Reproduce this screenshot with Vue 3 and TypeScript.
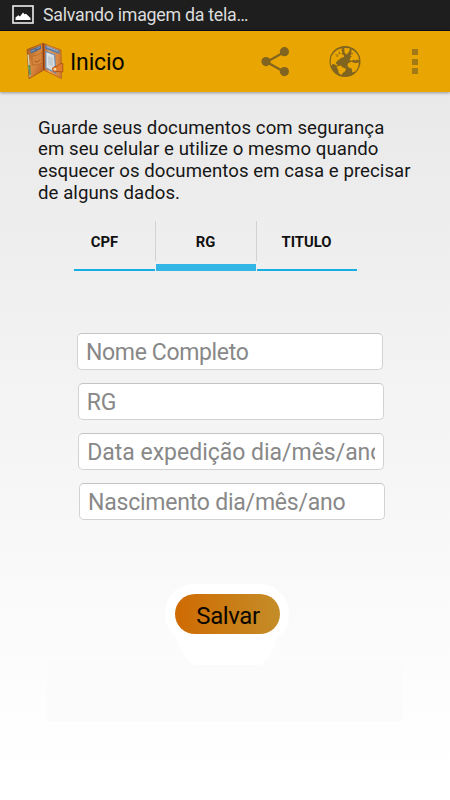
<script setup lang="ts">
import { ref } from 'vue'

type Tab = 'CPF' | 'RG' | 'TITULO'

const lines: string[] = [
  'Guarde seus documentos com segurança',
  'em seu celular e utilize o mesmo quando',
  'esquecer os documentos em casa e precisar',
  'de alguns dados.',
]
const tabs: Tab[] = ['CPF', 'RG', 'TITULO']
const active = ref<Tab>('RG')
const fields: string[] = [
  'Nome Completo',
  'RG',
  'Data expedição dia/mês/ano',
  'Nascimento dia/mês/ano',
]
</script>

<template>
  <div class="screen">
    <div class="status">
      <svg class="picture" width="22" height="19" viewBox="0 0 22 19">
        <rect x="1" y="1" width="20" height="17" fill="none" stroke="#e2e2e2" stroke-width="1.7" />
        <path d="M3.5 15V12.6L6.3 10.2L8 11.4L11 7.4L12.5 9.2L14 8.7L18.5 13V15Z" fill="#fff" />
      </svg>
      <span class="notice">Salvando imagem da tela…</span>
    </div>

    <header class="bar">
      <svg class="wallet" width="38" height="38" viewBox="0 0 38 38">
        <defs>
          <linearGradient id="leatherL" x1="0" y1="0" x2="1" y2="1">
            <stop offset="0" stop-color="#a8591f" />
            <stop offset=".5" stop-color="#d98a40" />
            <stop offset="1" stop-color="#b4541c" />
          </linearGradient>
          <linearGradient id="leatherR" x1="0" y1="0" x2="1" y2="0">
            <stop offset="0" stop-color="#a9480f" />
            <stop offset=".3" stop-color="#eda45c" />
            <stop offset="1" stop-color="#d07a35" />
          </linearGradient>
          <linearGradient id="card" x1="0" y1="0" x2="1" y2="1">
            <stop offset="0" stop-color="#e4eaee" />
            <stop offset=".6" stop-color="#d3dbe0" />
            <stop offset="1" stop-color="#edf0f1" />
          </linearGradient>
        </defs>
        <path d="M1 7.5L17 1.2L17.8 28L3 36.8Z" fill="url(#leatherL)" stroke="#9a4d18" stroke-width=".7" />
        <path d="M17 1.2L35 8L35.4 36.5L17.8 28Z" fill="url(#leatherR)" stroke="#a85820" stroke-width=".7" />
        <path d="M4 8L15 3.4V7L5 11.5Z" fill="#4d678c" />
        <path d="M5 9.5L9 7.6M10.5 6.8L14 5" stroke="#9fb1c2" stroke-width=".8" />
        <path d="M1.4 13L3.4 35L4.6 33L2.8 12.5Z" fill="#cfd6b4" />
        <path d="M2.2 23L3.4 34L5 32.5L4.2 23Z" fill="#58945f" />
        <path d="M6 14Q11 15 16 10V21Q11 24 6.4 23Z" fill="#d7853b" stroke="#ad6129" stroke-width=".6" />
        <path d="M8.5 19Q11.5 21.5 14 17.5" fill="none" stroke="#934c1c" stroke-width=".8" />
        <path d="M17.1 2L17.7 27.5" stroke="#8a3a0e" stroke-width="1" />
        <path d="M19 3.2L33.5 8.8V12L19 7Z" fill="#5f7b9f" />
        <path d="M20.5 4.8L32 9.2" stroke="#aebfcd" stroke-width=".8" />
        <path d="M19.8 9.5L28.6 12.8L29.8 31L19.8 26Z" fill="url(#card)" stroke="#7089a8" stroke-width="1.2" />
        <path d="M22 14L26.6 15.8L27 24.5L22.2 22.5Z" fill="#c3cdd2" />
        <path d="M36.8 21.5Q32.5 21 31 24.5Q26.6 24 26.4 27.4Q27 30.6 31 29.4L36.8 30Z" fill="#e07c2c" stroke="#a84a14" stroke-width=".8" />
        <circle cx="29" cy="27.2" r="1.3" fill="#ffdca6" />
      </svg>
      <h1 class="title">Inicio</h1>
      <svg class="share" width="30" height="32" viewBox="0 0 30 32" fill="#80641f">
        <path d="M23.5 6L5.5 16L23.5 26" fill="none" stroke="#80641f" stroke-width="2.2" />
        <circle cx="23.4" cy="5.7" r="4.6" />
        <circle cx="5" cy="15.6" r="4.6" />
        <circle cx="23.4" cy="25.6" r="4.6" />
      </svg>
      <svg class="globe" width="32" height="32" viewBox="0 0 32 32">
        <circle cx="16" cy="15.5" r="15.5" fill="#80641f" />
        <g fill="#e9a602">
          <path d="M2.4 10.5Q5 5.4 9.6 3.2L13.4 2.2L12.4 4.6L13.6 6.2L12.4 8L14.8 9L15 11L12 12L9.5 14L7.6 15.4L6.8 17.4L8.8 19L7.4 19.8L5 18L3.4 18.2L1.9 20Q1.2 15 2.4 10.5Z" />
          <path d="M15.2 2L20.8 2.2L20.4 5L18.6 7.6L17 8.6L15.6 6.4Z" />
          <path d="M22.4 3.6Q27.4 6 29.4 10.6L30.2 14.6L28 13.6L26.4 14.8L24.8 13.4L23 14.8L20.6 14.2L21.2 12L22.8 10.6L21.4 9.4L22.4 7Z" />
          <path d="M19.4 17L22.4 15.8L26 17L29.8 16.4Q29.8 21.6 26.6 25.2L23.4 26.4L22.6 22.4L19.6 21.4L18.4 19.2Z" />
          <path d="M7.6 20.6L11.6 19.6L14 21.4L17 22.8L16 25.4L13.8 27L12.4 29L9.8 27.2L9.2 24.2Z" />
        </g>
        <path d="M6.6 8.6L8.6 9.4L8 11M10 5.6L11 7.4L9.4 8M22 8.2L24.2 7.4" fill="none" stroke="#80641f" stroke-width=".9" />
      </svg>
      <div class="more"><i></i><i></i><i></i></div>
    </header>

    <main class="body">
      <p class="intro">
        <span v-for="line in lines" :key="line" class="line">{{ line }}</span>
      </p>

      <nav class="tabs">
        <button
          v-for="tab in tabs"
          :key="tab"
          class="tab"
          :class="{ active: tab === active }"
          @click="active = tab"
        >
          <span class="label">{{ tab }}</span>
          <span class="underline"></span>
        </button>
      </nav>

      <form class="form" @submit.prevent>
        <input v-for="f in fields" :key="f" class="field" type="text" :placeholder="f" />
        <div class="action">
          <svg class="halo" width="126" height="84" viewBox="0 0 126 84">
            <path d="M30 1H95C112 1 125 14 125 31C125 42 119 51 113 55C110 67 104 79 96 82H31C22 79 16 67 13 55C6 50 1 42 1 31C1 14 13 1 30 1Z" fill="#fff" />
          </svg>
          <button class="save">Salvar</button>
        </div>
      </form>
    </main>
  </div>
</template>

<style>
body {
  margin: 0;
}
</style>

<style scoped>
.screen {
  width: 450px;
  height: 800px;
  overflow: hidden;
  display: flex;
  flex-direction: column;
  font-family: Roboto, "Liberation Sans", sans-serif;
  color: #161616;
}
.status {
  height: 31px;
  flex: none;
  box-sizing: border-box;
  display: flex;
  align-items: center;
  padding-left: 12px;
  background: #1e1e1e;
  border-bottom: 1px solid #0c0a20;
}
.picture {
  margin: -1px 9px 0 0;
}
.notice {
  margin-top: -1px;
  font-size: 17.8px;
  letter-spacing: -0.26px;
  color: #dcdcdc;
  white-space: nowrap;
}
.bar {
  height: 61px;
  flex: none;
  display: flex;
  align-items: center;
  padding-left: 26px;
  background: #e9a602;
  box-shadow: 0 1px 3px rgba(0, 0, 0, 0.35);
  z-index: 1;
}
.wallet {
  margin-top: -1px;
}
.title {
  width: 191px;
  margin: 2px 0 0 6px;
  font-size: 23px;
  font-weight: 400;
  letter-spacing: -0.15px;
  color: #0c0900;
}
.globe {
  margin-left: 38px;
}
.more {
  display: flex;
  flex-direction: column;
  gap: 3.5px;
  margin-left: 51px;
}
.more i {
  width: 6px;
  height: 6px;
  background: #a27917;
}
.body {
  flex: 1;
  padding-top: 25.6px;
  background:
    linear-gradient(#fbfbfb, #fbfbfb) 47px 569px / 356px 60px no-repeat,
    linear-gradient(#e9e9e9, #eeeeee 20%, #f1f1f1 33%, #f6f6f6 54%, #fafafa 72%, #fcfcfc 80%, #fefefe 90%, #fff);
}
.intro {
  margin: 0 0 0 38px;
  font-size: 18.6px;
  letter-spacing: 0.07px;
  line-height: 21.8px;
}
.line {
  display: block;
  white-space: nowrap;
}
.tabs {
  display: flex;
  width: 284px;
  margin: 16.2px 0 0 74px;
}
.tab {
  display: flex;
  flex-direction: column;
  justify-content: space-between;
  box-sizing: border-box;
  width: 101px;
  height: 50px;
  padding: 0;
  border: 0;
  background: linear-gradient(#d2d2d2, #d2d2d2) left top / 1px 40px no-repeat;
  font: 700 14.8px Roboto, sans-serif;
  color: #111;
}
.tab:first-child {
  width: 81px;
  background: none;
}
.label {
  line-height: 43px;
}
.tab:first-child .label {
  padding-right: 20px;
}
.underline {
  height: 1.5px;
  margin-left: 1px;
  background: #16afe4;
}
.tab:first-child .underline {
  margin-left: 0;
}
.active .underline {
  height: 7px;
  background: #33b5e5;
}
.form {
  display: flex;
  flex-direction: column;
  gap: 13px;
  margin: 62.2px 0 0 77px;
}
.field {
  box-sizing: border-box;
  width: 306px;
  height: 37px;
  padding: 2px 8px 0 8px;
  border: 1px solid #d2d2d2;
  border-top-color: #c4c4c4;
  border-radius: 5px;
  background: #fff;
  font: 23px Roboto, sans-serif;
  letter-spacing: -0.22px;
  outline: none;
}
.field:nth-child(1) {
  letter-spacing: -0.35px;
}
.field:nth-child(2) {
  margin-left: 0.7px;
}
.field:nth-child(3) {
  margin-left: 1.3px;
  letter-spacing: -0.02px;
}
.field:nth-child(4) {
  margin-left: 2px;
}
.field::placeholder {
  color: #888;
}
.action {
  display: grid;
  width: 126px;
  margin: 50px 0 0 87px;
}
.halo,
.save {
  grid-area: 1 / 1;
}
.save {
  width: 105px;
  height: 40px;
  margin: 11px 0 0 11px;
  padding: 3px 0 0 1px;
  border: 0;
  border-radius: 20px;
  background: linear-gradient(90deg, #cf6b02, #c48d28);
  font: 24px Roboto, sans-serif;
  letter-spacing: -0.4px;
  color: #0a0500;
}
</style>
